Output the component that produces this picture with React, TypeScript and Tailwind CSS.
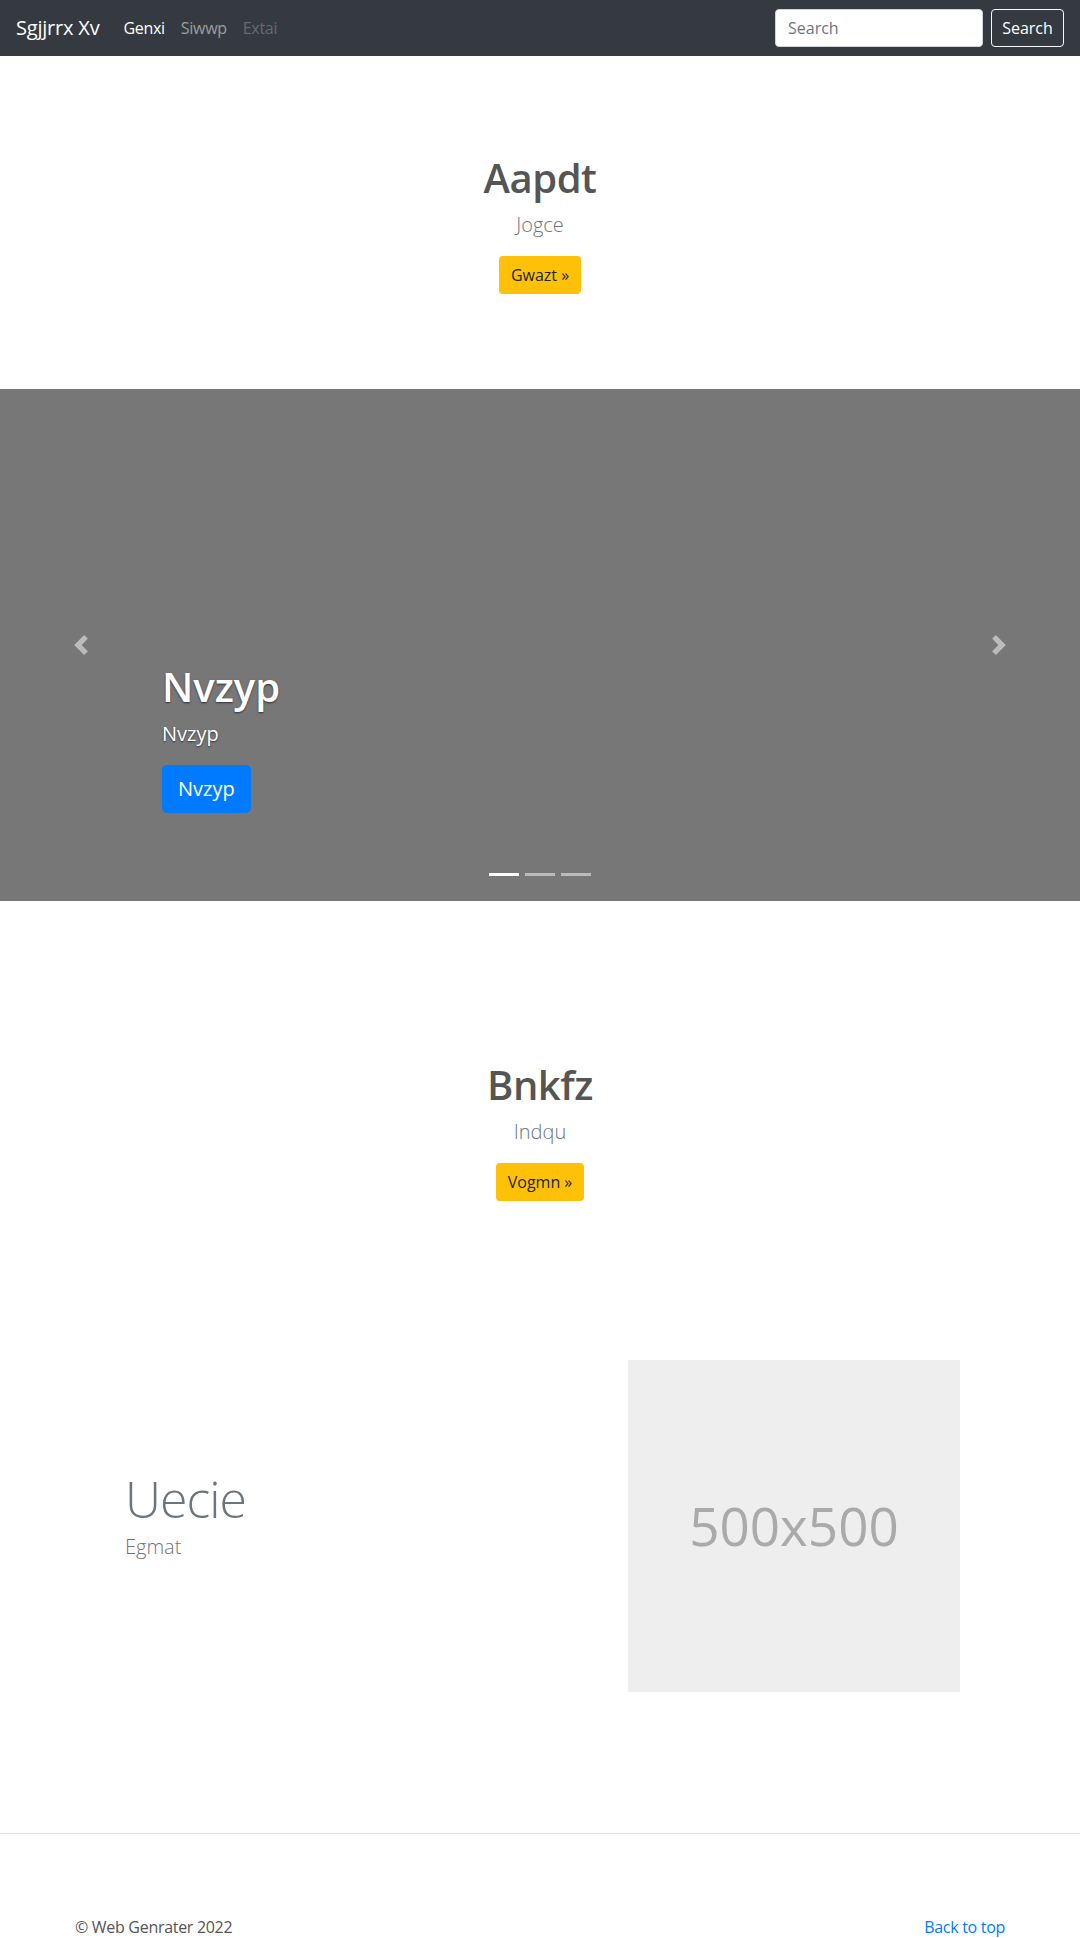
export default function App() {
  return (
    <div className="min-h-screen bg-white font-['Segoe_UI','Open_Sans',sans-serif] text-[#212529]">
      {/* Navbar */}
      <nav className="flex h-14 items-center bg-[#343a40] px-4">
        <a className="mr-4 py-[5px] text-xl leading-[30px] tracking-[-0.2px] text-white">Sgjjrrx Xv</a>
        <ul className="flex tracking-[-0.3px]">
          <li className="px-2 text-base leading-6 text-white">Genxi</li>
          <li className="px-2 text-base leading-6 text-white/50">Siwwp</li>
          <li className="px-2 text-base leading-6 text-white/25">Extai</li>
        </ul>
        <form className="ml-auto flex items-center">
          <input
            placeholder="Search"
            className="mr-2 h-[38px] w-[208px] rounded border border-[#ced4da] bg-white px-3 text-base text-[#495057] placeholder:text-[#6c757d]"
          />
          <button
            type="button"
            className="h-[38px] w-[73px] rounded border border-[#f8f9fa] text-base text-white"
          >
            Search
          </button>
        </form>
      </nav>

      {/* Intro */}
      <section className="pt-[98px] pb-[95px] text-center">
        <h1 className="mb-2 text-[40px] font-semibold leading-[48px] tracking-[-0.5px] text-[#555]">Aapdt</h1>
        <p className="mb-4 text-xl font-light leading-[30px] text-[#6c757d]">Jogce</p>
        <a className="inline-block h-[38px] rounded bg-[#ffc107] px-3 text-base leading-[38px] text-[#212529]">
          Gwazt »
        </a>
      </section>

      {/* Carousel */}
      <div className="relative flex h-[512px] flex-col justify-end bg-[#777] pr-[15%] pb-[84px] pl-[162px] text-white">
        <h1 className="mb-2 text-[40px] font-semibold leading-[48px] [text-shadow:0_1px_2px_rgba(0,0,0,.6)]">
          Nvzyp
        </h1>
        <p className="mb-4 text-xl leading-[30px] [text-shadow:0_1px_2px_rgba(0,0,0,.6)]">Nvzyp</p>
        <div className="mb-1">
          <a className="inline-block h-12 rounded-[5px] bg-[#007bff] px-4 text-xl leading-[48px] text-white">
            Nvzyp
          </a>
        </div>

        <div className="absolute top-0 bottom-0 left-0 flex w-[15%] items-center justify-center opacity-50">
          <svg width="20" height="20" viewBox="0 0 8 8" fill="#fff">
            <path d="M5.25 0l-4 4 4 4 1.5-1.5L4.25 4l2.5-2.5L5.25 0z" />
          </svg>
        </div>
        <div className="absolute top-0 right-0 bottom-0 flex w-[15%] items-center justify-center opacity-50">
          <svg width="20" height="20" viewBox="0 0 8 8" fill="#fff">
            <path d="M2.75 0l-1.5 1.5L3.75 4l-2.5 2.5L2.75 8l4-4-4-4z" />
          </svg>
        </div>
        <ol className="absolute right-0 bottom-[25px] left-0 flex justify-center gap-[6px]">
          <li className="h-[3px] w-[30px] bg-white" />
          <li className="h-[3px] w-[30px] bg-white/50" />
          <li className="h-[3px] w-[30px] bg-white/50" />
        </ol>
      </div>

      {/* Second intro */}
      <section className="mt-16 pt-24 pb-24 text-center">
        <h1 className="mb-2 text-[40px] font-semibold leading-[48px] tracking-[-0.5px] text-[#555]">Bnkfz</h1>
        <p className="mb-4 text-xl font-light leading-[30px] text-[#6c757d]">Indqu</p>
        <a className="inline-block h-[38px] rounded bg-[#ffc107] px-3 text-base leading-[38px] text-[#212529]">
          Vogmn »
        </a>
      </section>

      {/* Featurette */}
      <section className="pt-[63px] pb-[141px]">
        <div className="flex items-center">
          <div className="w-[628px] pl-[125px]">
            <h2 className="mb-2 text-[50px] font-light leading-none tracking-[-1px] text-[#6c757d]">Uecie</h2>
            <p className="mb-4 text-xl font-light leading-[30px] text-[#6c757d]">Egmat</p>
          </div>
          <div className="flex h-[332px] w-[332px] items-center justify-center bg-[#eee]">
            <span className="text-[53px] text-[#aaa]">500x500</span>
          </div>
        </div>
      </section>

      {/* Footer */}
      <hr className="border-t border-[#e6e6e6]" />
      <footer className="mx-auto flex w-[960px] justify-between px-[15px] pt-[81px] pb-[81px] text-base leading-6 tracking-[-0.3px]">
        <p className="text-[#555]">© Web Genrater 2022</p>
        <a className="text-[#007bff]">Back to top</a>
      </footer>
    </div>
  )
}
